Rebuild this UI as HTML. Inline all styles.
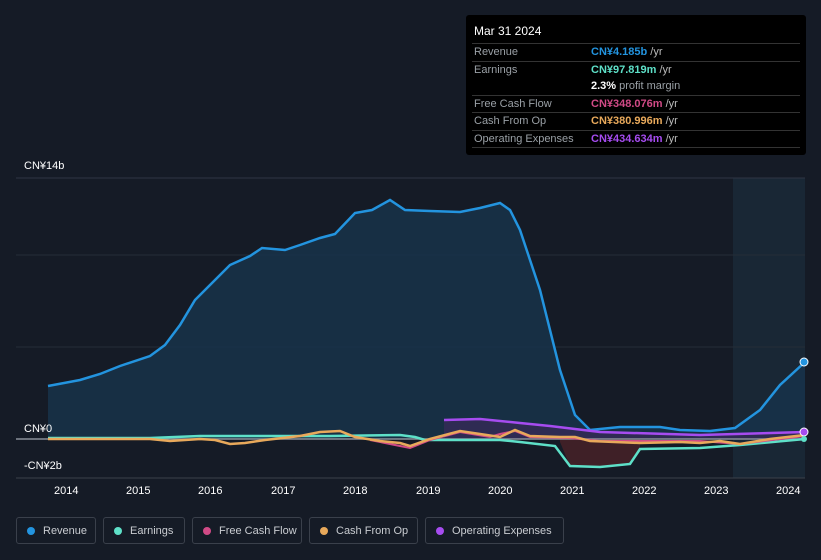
<!DOCTYPE html>
<html><head><meta charset="utf-8"><style>
body{margin:0;background:#151b26;width:821px;height:560px;overflow:hidden;font-family:"Liberation Sans",sans-serif;position:relative}
.tt{position:absolute;left:466px;top:15px;width:340px;height:140px;background:#000;border-radius:3px;font-size:11px}
.tt .h{color:#fff;font-size:12px;padding:9px 8px 5px}
.row{display:flex;border-top:1px solid #333;margin:0 6px;height:16.5px;align-items:center;padding-left:2px}
.row .l{width:117px;color:#9aa0a6}
.row b{font-weight:bold}
.row span.u{color:#bbb;margin-left:3px}
.leg{position:absolute;top:517px;height:27px;border:1px solid #3a404b;border-radius:3px;color:#c9ccd1;font-size:11px;display:flex;align-items:center;box-sizing:border-box;padding-left:10px}
.leg i{width:8px;height:8px;border-radius:50%;display:inline-block;margin-right:8px}
.ax{position:absolute;color:#fff;font-size:11px}
</style></head><body>
<svg width="821" height="560" style="position:absolute;left:0;top:0">
<rect x="733" y="178" width="72" height="300" fill="#1a2a3a" opacity="0.8"/>
<line x1="16" y1="178" x2="805" y2="178" stroke="#2e3644"/>
<line x1="16" y1="255" x2="805" y2="255" stroke="#252c38"/>
<line x1="16" y1="347" x2="805" y2="347" stroke="#252c38"/>
<path d="M48,386 L80,380 L100,374 L120,366 L150,356 L165,345 L180,325 L195,300 L210,285 L230,265 L250,256 L262,248 L285,250 L300,245 L320,238 L335,234 L355,213 L372,210 L390,200 L405,210 L430,211 L460,212 L480,208 L500,203 L510,210 L520,230 L540,290 L560,370 L575,415 L590,430 L620,427 L660,427 L680,430 L710,431 L735,428 L760,410 L780,385 L805,362 L805,439 L48,439Z" fill="#17324a" opacity="0.85"/>
<path d="M444,420 L480,419 L520,423 L550,426 L600,432 L700,435 L805,432 L805,439 L444,439Z" fill="#3a2a5a" opacity="0.7"/>
<path d="M560,442 L570,466 L600,467 L630,464 L640,449 L640,439 L560,439Z" fill="#4a2228" opacity="0.8"/>
<line x1="16" y1="439" x2="805" y2="439" stroke="#8a9099" stroke-width="1.5"/>
<line x1="16" y1="478" x2="805" y2="478" stroke="#3a404b"/>
<path d="M48,386 L80,380 L100,374 L120,366 L150,356 L165,345 L180,325 L195,300 L210,285 L230,265 L250,256 L262,248 L285,250 L300,245 L320,238 L335,234 L355,213 L372,210 L390,200 L405,210 L430,211 L460,212 L480,208 L500,203 L510,210 L520,230 L540,290 L560,370 L575,415 L590,430 L620,427 L660,427 L680,430 L710,431 L735,428 L760,410 L780,385 L805,362" fill="none" stroke="#2394df" stroke-width="2.5"/>
<path d="M48,438 L150,438 L200,436 L260,436 L330,436 L400,435 L415,437 L425,440 L500,440 L520,442 L555,446 L570,466 L600,467 L630,464 L640,449 L700,448 L740,445 L805,439" fill="none" stroke="#5ee0c8" stroke-width="2.5"/>
<path d="M444,420 L480,419 L520,423 L550,426 L600,432 L700,435 L805,432" fill="none" stroke="#a64cf0" stroke-width="2.5"/>
<path d="M370,440 L400,446 L410,448 L430,440 L460,432 L490,437 L500,434 L515,431 L530,437 L570,438 L600,441 L700,441 L740,444 L805,436" fill="none" stroke="#d04a86" stroke-width="2"/>
<path d="M48,439 L150,439 L170,441 L200,439 L215,440 L230,444 L245,443 L265,440 L300,436 L320,432 L340,431 L355,437 L380,441 L400,443 L410,446 L430,439 L460,431 L480,434 L500,437 L515,430 L530,436 L560,437 L575,437 L590,441 L640,443 L680,442 L700,443 L720,441 L740,444 L770,439 L805,435" fill="none" stroke="#e8a95b" stroke-width="2.5"/>
<circle cx="804" cy="362" r="4" fill="#2394df" stroke="#fff" stroke-width="1"/>
<circle cx="804" cy="432" r="4" fill="#a64cf0" stroke="#fff" stroke-width="1"/>
<circle cx="804" cy="439" r="3" fill="#5ee0c8"/>
</svg>
<div class="ax" style="left:24px;top:160px">CN¥14b</div>
<div class="ax" style="left:24px;top:423px">CN¥0</div>
<div class="ax" style="left:24px;top:460px">-CN¥2b</div>
<div class="ax" style="left:54px;top:485px">2014</div>
<div class="ax" style="left:126px;top:485px">2015</div>
<div class="ax" style="left:198px;top:485px">2016</div>
<div class="ax" style="left:271px;top:485px">2017</div>
<div class="ax" style="left:343px;top:485px">2018</div>
<div class="ax" style="left:416px;top:485px">2019</div>
<div class="ax" style="left:488px;top:485px">2020</div>
<div class="ax" style="left:560px;top:485px">2021</div>
<div class="ax" style="left:632px;top:485px">2022</div>
<div class="ax" style="left:704px;top:485px">2023</div>
<div class="ax" style="left:776px;top:485px">2024</div>
<div class="tt"><div class="h">Mar 31 2024</div>
<div class="row"><span class="l">Revenue</span><b style="color:#2394df">CN¥4.185b</b><span class="u">/yr</span></div>
<div class="row"><span class="l">Earnings</span><b style="color:#5ee0c8">CN¥97.819m</b><span class="u">/yr</span></div>
<div class="row" style="border-top:none"><span class="l"></span><b style="color:#fff">2.3%</b><span class="u" style="color:#9aa0a6">profit margin</span></div>
<div class="row"><span class="l">Free Cash Flow</span><b style="color:#d04a86">CN¥348.076m</b><span class="u">/yr</span></div>
<div class="row"><span class="l">Cash From Op</span><b style="color:#e8a95b">CN¥380.996m</b><span class="u">/yr</span></div>
<div class="row" style="border-bottom:1px solid #333"><span class="l">Operating Expenses</span><b style="color:#a64cf0">CN¥434.634m</b><span class="u">/yr</span></div>
</div>
<div class="leg" style="left:16px;width:80px"><i style="background:#2394df"></i>Revenue</div>
<div class="leg" style="left:103px;width:82px"><i style="background:#5ee0c8"></i>Earnings</div>
<div class="leg" style="left:192px;width:110px"><i style="background:#d04a86"></i>Free Cash Flow</div>
<div class="leg" style="left:309px;width:109px"><i style="background:#e8a95b"></i>Cash From Op</div>
<div class="leg" style="left:425px;width:139px"><i style="background:#a64cf0"></i>Operating Expenses</div>
</body></html>
